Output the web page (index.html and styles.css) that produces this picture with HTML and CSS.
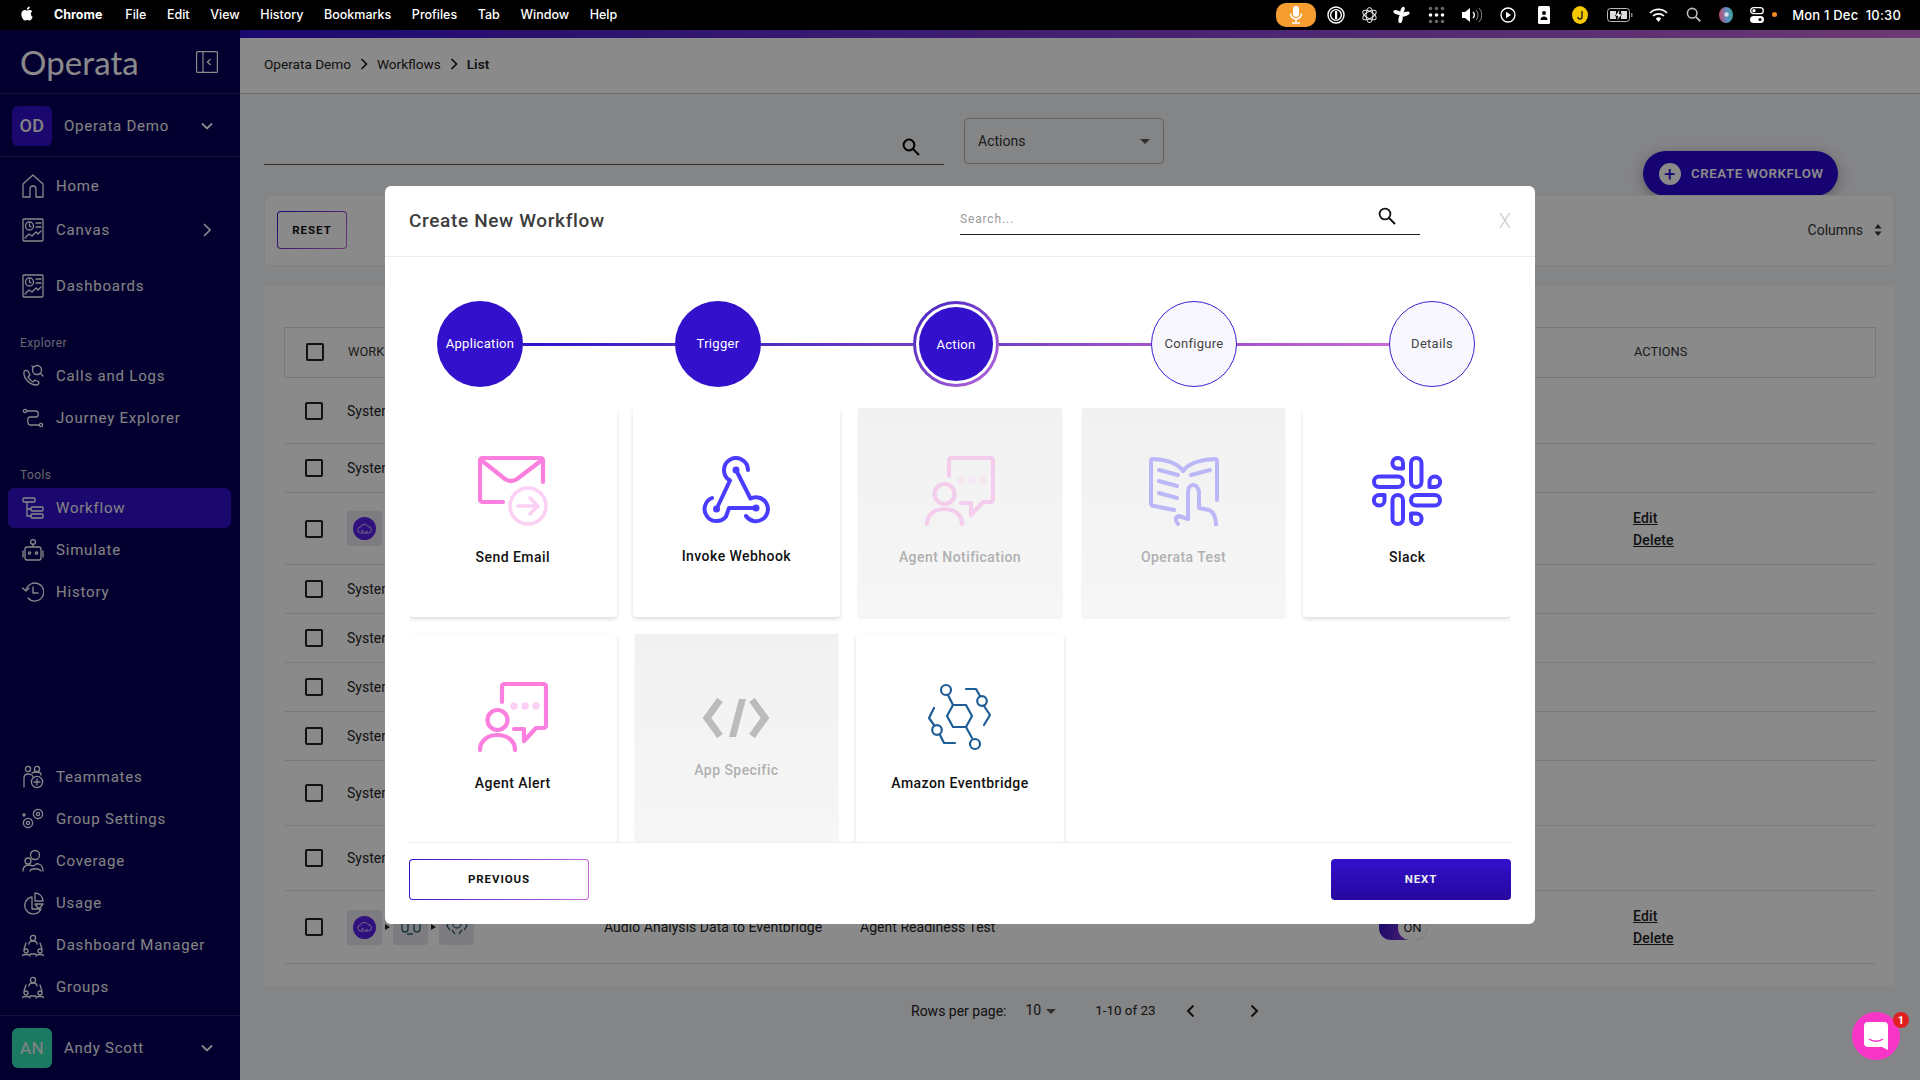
FILE: index.html
```html
<!DOCTYPE html>
<html lang="en">
<head>
<meta charset="utf-8">
<title>Operata - Workflows</title>
<link rel="stylesheet" href="styles.css">
</head>
<body>
<header class="menubar">
  <div class="menu-left">
    <svg class="apple" viewBox="0 0 24 24"><path fill="#fff" d="M12.152 6.896c-.948 0-2.415-1.078-3.96-1.04-2.04.027-3.91 1.183-4.961 3.014-2.117 3.675-.546 9.103 1.519 12.09 1.013 1.454 2.208 3.09 3.792 3.039 1.52-.065 2.09-.987 3.935-.987 1.831 0 2.35.987 3.96.948 1.637-.026 2.676-1.48 3.676-2.948 1.156-1.688 1.636-3.325 1.662-3.415-.039-.013-3.182-1.221-3.22-4.857-.026-3.04 2.48-4.494 2.597-4.559-1.429-2.09-3.623-2.324-4.39-2.376-2-.156-3.675 1.09-4.61 1.09zM15.53 3.83c.843-1.012 1.4-2.427 1.245-3.83-1.207.052-2.662.805-3.532 1.818-.78.896-1.454 2.338-1.273 3.714 1.338.104 2.715-.688 3.559-1.701"/></svg>
    <b>Chrome</b><span>File</span><span>Edit</span><span>View</span><span>History</span><span>Bookmarks</span><span>Profiles</span><span>Tab</span><span>Window</span><span>Help</span>
  </div>
  <div class="menu-right">
    <span class="mic"><svg width="14" height="20" viewBox="0 0 14 20"><rect x="4" y="1" width="6" height="11" rx="3" fill="#fff"/><path d="M1.5 8.5a5.5 5.5 0 0 0 11 0M7 14v3M3 18h8" fill="none" stroke="#fff" stroke-width="1.5"/></svg></span>
    <svg class="tray t1" width="18" height="18" viewBox="0 0 18 18"><circle cx="9" cy="9" r="8" fill="none" stroke="#fff" stroke-width="1.4"/><circle cx="9" cy="9" r="5.4" fill="none" stroke="#fff" stroke-width="1.4"/><rect x="8" y="5" width="2.2" height="8" fill="#fff"/></svg>
    <svg class="tray t2" width="17" height="18" viewBox="0 0 18 18"><g fill="none" stroke="#ddd" stroke-width="1.1"><ellipse cx="9" cy="9" rx="8" ry="3.6" transform="rotate(30 9 9)"/><ellipse cx="9" cy="9" rx="8" ry="3.6" transform="rotate(90 9 9)"/><ellipse cx="9" cy="9" rx="8" ry="3.6" transform="rotate(150 9 9)"/></g></svg>
    <svg class="tray t3" width="17" height="18" viewBox="0 0 18 18"><g fill="#fff"><ellipse cx="5" cy="6.5" rx="4.8" ry="2.2" transform="rotate(20 5 6.5)"/><ellipse cx="13" cy="8" rx="4.8" ry="2.2" transform="rotate(-20 13 8)"/><ellipse cx="10" cy="4" rx="2" ry="4" transform="rotate(20 10 4)"/><ellipse cx="8" cy="13" rx="2.2" ry="4.6" transform="rotate(10 8 13)"/></g></svg>
    <svg class="tray t4" width="17" height="18" viewBox="0 0 17 18"><g fill="#666"><circle cx="2.5" cy="2.5" r="1.8"/><circle cx="8.5" cy="2.5" r="1.8"/><circle cx="14.5" cy="2.5" r="1.8"/><circle cx="2.5" cy="15.5" r="1.8"/><circle cx="8.5" cy="15.5" r="1.8"/><circle cx="14.5" cy="15.5" r="1.8"/></g><g fill="#fff"><circle cx="2.5" cy="9" r="1.8"/><circle cx="8.5" cy="9" r="1.8"/><circle cx="14.5" cy="9" r="1.8"/></g></svg>
    <svg class="tray t5" width="20" height="16" viewBox="0 0 20 16"><path d="M0 5h3l5-4v14l-5-4H0z" fill="#fff"/><path d="M11 5a4 4 0 0 1 0 6" fill="none" stroke="#fff" stroke-width="1.4"/><path d="M14 3a7 7 0 0 1 0 10M17 1a10 10 0 0 1 0 14" fill="none" stroke="#888" stroke-width="1"/></svg>
    <svg class="tray t6" width="16" height="16" viewBox="0 0 16 16"><circle cx="8" cy="8" r="7" fill="none" stroke="#fff" stroke-width="1.3"/><path d="M6 4.8 11 8l-5 3.2z" fill="#fff"/></svg>
    <svg class="tray t7" width="12" height="18" viewBox="0 0 12 18"><rect width="12" height="18" rx="1.5" fill="#fff"/><circle cx="6" cy="7" r="2" fill="#000"/><path d="M2.5 14a3.5 3.5 0 0 1 7 0z" fill="#000"/></svg>
    <svg class="tray t8" width="16" height="18" viewBox="0 0 16 18"><ellipse cx="8" cy="9" rx="8" ry="9" fill="#f5c800"/><path d="M10 5v6a2 2 0 0 1-4 0" fill="none" stroke="#222" stroke-width="1.4"/></svg>
    <svg class="tray t9" width="26" height="14" viewBox="0 0 26 14"><rect x=".5" y=".5" width="22" height="13" rx="3" fill="none" stroke="#bbb"/><path d="M3 3h6v8H3zM14 3h6v8h-6z" fill="#ddd"/><path d="M13 1 8 8h3l-1 5 5-7h-3z" fill="#fff" stroke="#000" stroke-width=".6"/><rect x="24" y="5" width="1.5" height="4" fill="#888"/></svg>
    <svg class="tray t10" width="19" height="14" viewBox="0 0 19 14"><g fill="none" stroke="#fff" stroke-width="1.7"><path d="M1 5a12 12 0 0 1 17 0"/><path d="M4 8a8 8 0 0 1 11 0"/></g><path d="M9.5 14 6.8 10.6a4 4 0 0 1 5.4 0z" fill="#fff"/></svg>
    <svg class="tray t11" width="15" height="15" viewBox="0 0 15 15"><circle cx="6.2" cy="6.2" r="4.8" fill="none" stroke="#bbb" stroke-width="1.6"/><path d="m10 10 4.4 4.4" stroke="#bbb" stroke-width="1.8"/></svg>
    <svg class="tray t12" width="14" height="16" viewBox="0 0 14 16"><defs><linearGradient id="siri" x1="0" x2="1"><stop offset="0" stop-color="#c2476a"/><stop offset=".55" stop-color="#5f8fc2"/><stop offset="1" stop-color="#3aa59b"/></linearGradient></defs><ellipse cx="7" cy="8" rx="7" ry="8" fill="url(#siri)"/><circle cx="7.5" cy="7.5" r="2.2" fill="#d9dfe8"/></svg>
    <svg class="tray t13" width="14" height="16" viewBox="0 0 14 16"><rect x=".7" y=".7" width="12.6" height="6" rx="3" fill="none" stroke="#fff" stroke-width="1.3"/><circle cx="4" cy="3.7" r="1.6" fill="#fff"/><rect y="9" width="14" height="7" rx="3.5" fill="#fff"/><circle cx="10" cy="12.5" r="1.6" fill="#000"/></svg>
    <span class="dot"></span>
    <span class="clock">Mon 1 Dec&nbsp;&nbsp;10:30</span>
  </div>
</header>

<div class="app">
  <aside class="sidebar">
    <div class="brand">
      <span class="logo">Operata</span>
      <svg class="collapse" width="22" height="22" viewBox="0 0 22 22"><g fill="none" stroke="#fff" stroke-width="1.2"><rect x=".6" y=".6" width="20.8" height="20.8" rx="1"/><path d="M7 1v20"/><path d="m14.5 8-3 3 3 3" stroke-width="1.4"/></g></svg>
    </div>
    <div class="org">
      <span class="avatar avatar-org">OD</span>
      <span class="org-name">Operata Demo</span>
      <svg class="chev-down" width="12" height="8" viewBox="0 0 12 8"><path d="m1 1.5 5 5 5-5" fill="none" stroke="#fff" stroke-width="1.8"/></svg>
    </div>
    <nav class="nav">
      <a class="item first"><svg class="ni" viewBox="0 0 22 24"><path d="M1 10 11 1l10 9v13h-7v-8a3 3 0 0 0-6 0v8H1z"/></svg>Home</a>
      <a class="item canvas"><svg class="ni" viewBox="0 0 22 24"><rect x="1" y="1" width="20" height="22" rx="1"/><circle cx="7.5" cy="8" r="4"/><path d="M7.5 6v2l1.5 1M14 5h5M14 9h5M3 20l4-4 3 2 4-4 2 2 3-3"/></svg>Canvas<svg class="chev-right" width="8" height="14" viewBox="0 0 8 14"><path d="m1 1 6 6-6 6" fill="none" stroke="#fff" stroke-width="1.6"/></svg></a>
      <a class="item dash"><svg class="ni" viewBox="0 0 22 24"><rect x="1" y="1" width="20" height="22" rx="1"/><circle cx="7.5" cy="8" r="4"/><path d="M7.5 6v2l1.5 1M14 5h5M14 9h5M3 20l4-4 3 2 4-4 2 2 3-3"/></svg>Dashboards</a>
      <div class="nav-label">Explorer</div>
      <a class="item"><svg class="ni" viewBox="0 0 22 24"><path d="M2 8c-1 6 6 13 12 13 2 0 3-1 3-3l-4-2-2 2c-2-1-4-3-5-5l2-2-2-4C4 6 2 6 2 8z"/><circle cx="15" cy="6" r="4.5"/><path d="m18 9 3 3M11 3l-1-1"/></svg>Calls and Logs</a>
      <a class="item"><svg class="ni" viewBox="0 0 22 24"><circle cx="3" cy="5" r="1.6"/><circle cx="19" cy="19" r="1.6"/><path d="M5 5h9c3 0 3 6 0 6H8c-3 0-3 8 0 8h9"/></svg>Journey Explorer</a>
      <div class="nav-label">Tools</div>
      <a class="item active"><svg class="ni" viewBox="0 0 22 24"><rect x="1" y="2" width="12" height="4" rx="1"/><rect x="9" y="11" width="12" height="4" rx="1"/><rect x="9" y="18" width="12" height="4" rx="1"/><path d="M5 6v7h4M5 13v7h4"/></svg>Workflow</a>
      <a class="item"><svg class="ni" viewBox="0 0 22 24"><rect x="3" y="9" width="16" height="13" rx="2"/><circle cx="11" cy="4" r="2.4"/><path d="M11 6v3M1 13v6M21 13v6"/><circle cx="7.5" cy="15" r="1.2"/><circle cx="14.5" cy="15" r="1.2"/></svg>Simulate</a>
      <a class="item"><svg class="ni" viewBox="0 0 22 24"><path d="M4 10a9 9 0 1 1 2 8"/><path d="m0.5 8 3.5 3 3-3M11 7v6h5"/></svg>History</a>
      <div class="nav-bottom">
        <a class="item"><svg class="ni" viewBox="0 0 22 24"><circle cx="6" cy="4" r="2.6"/><circle cx="15" cy="4" r="2.6"/><path d="M2 22v-9c0-3 2-4 4-4s5 1 5 3M10 8c1-1 3-1 5-1s4 1 4 3"/><circle cx="15" cy="17" r="5.6"/><path d="M15 14v6M12 17h6"/></svg>Teammates</a>
        <a class="item"><svg class="ni" viewBox="0 0 22 24"><circle cx="6" cy="16" r="4.6" stroke-dasharray="2 1"/><circle cx="6" cy="16" r="1.6"/><circle cx="16" cy="7" r="4.6" stroke-dasharray="2 1"/><circle cx="16" cy="7" r="1.6"/><circle cx="2" cy="8" r="1"/></svg>Group Settings</a>
        <a class="item"><svg class="ni" viewBox="0 0 22 24"><circle cx="13" cy="6" r="4.5"/><circle cx="6" cy="12" r="3"/><path d="M1 22c0-5 3-6 6-6s5 2 6 0 8-2 8 6M8 22c1-3 9-3 11 0"/></svg>Coverage</a>
        <a class="item"><svg class="ni" viewBox="0 0 22 24"><path d="M10 6a8.5 8.5 0 1 0 9 12H10z"/><path d="M13 2a8 8 0 0 1 8 8h-8zM13 13h8l-4 5z"/></svg>Usage</a>
        <a class="item"><svg class="ni" viewBox="0 0 22 24"><circle cx="11" cy="5" r="2.6"/><path d="M7 11c0-2 2-3 4-3s4 1 4 3M4 10 2 16M18 10l2 6M8 21h6"/><circle cx="4" cy="18" r="2"/><circle cx="18" cy="18" r="2"/><path d="M0 23c0-2 8-2 8 0M14 23c0-2 8-2 8 0"/></svg>Dashboard Manager</a>
        <a class="item"><svg class="ni" viewBox="0 0 22 24"><circle cx="11" cy="5" r="2.6"/><path d="M7 11c0-2 2-3 4-3s4 1 4 3M4 10 2 16M18 10l2 6M8 21h6"/><circle cx="4" cy="18" r="2"/><circle cx="18" cy="18" r="2"/><path d="M0 23c0-2 8-2 8 0M14 23c0-2 8-2 8 0"/></svg>Groups</a>
      </div>
    </nav>
    <div class="user">
      <span class="avatar avatar-user">AN</span>
      <span class="org-name">Andy Scott</span>
      <svg class="chev-down" width="12" height="8" viewBox="0 0 12 8"><path d="m1 1.5 5 5 5-5" fill="none" stroke="#fff" stroke-width="1.8"/></svg>
    </div>
  </aside>

  <main class="main">
    <div class="topline"></div>
    <div class="crumbs">
      <span>Operata Demo</span><svg class="crumb-sep" width="8" height="12" viewBox="0 0 8 12"><path d="m1.5 1 5 5-5 5" fill="none" stroke="#111" stroke-width="1.6"/></svg>
      <span>Workflows</span><svg class="crumb-sep" width="8" height="12" viewBox="0 0 8 12"><path d="m1.5 1 5 5-5 5" fill="none" stroke="#111" stroke-width="1.6"/></svg>
      <b>List</b>
    </div>
    <div class="toolbar">
      <div class="searchbox">
        <svg class="search-ic" width="18" height="18" viewBox="0 0 18 18"><circle cx="7" cy="7" r="5.4" fill="none" stroke="#000" stroke-width="2"/><path d="m11 11 6 6" stroke="#000" stroke-width="2"/></svg>
      </div>
      <div class="select"><span class="select-text">Actions</span><span class="caret"></span></div>
      <button class="create"><span class="plus">+</span>CREATE WORKFLOW</button>
    </div>
    <div class="filters">
      <button class="reset">RESET</button>
      <div class="columns">Columns
        <svg width="8" height="14" viewBox="0 0 8 14"><path d="M4 1 7.5 5.5H.5zM4 13 .5 8.5h7z" fill="#333"/></svg>
      </div>
    </div>
    <section class="table-card">
      <div class="row head"><span class="check"></span><span class="cell">WORKFLOW</span><span></span><span></span><span></span><span class="cell">ACTIONS</span></div>
      <div class="row h66"><span class="check"></span><span class="cell">System</span></div>
      <div class="row h49"><span class="check"></span><span class="cell">System</span></div>
      <div class="row h72"><span class="check"></span><span class="apps"><span class="app-box"><span class="app-dot"><svg width="15" height="12" viewBox="0 0 15 12"><path d="M4 10a3 3 0 0 1-.4-6A4 4 0 0 1 11 3.600 3.200 3.200 0 0 1 11.500 10z" fill="none" stroke="#cfc4f5" stroke-width="1"/><circle cx="5.500" cy="8" r="1" fill="#cfc4f5"/><circle cx="9.500" cy="9" r="1" fill="#cfc4f5"/></svg></span></span></span><span></span><span></span><span></span><span class="acts"><u>Edit</u><u>Delete</u></span></div>
      <div class="row h49"><span class="check"></span><span class="cell">System</span></div>
      <div class="row h49"><span class="check"></span><span class="cell">System</span></div>
      <div class="row h49"><span class="check"></span><span class="cell">System</span></div>
      <div class="row h49"><span class="check"></span><span class="cell">System</span></div>
      <div class="row h65"><span class="check"></span><span class="cell">System</span></div>
      <div class="row h65"><span class="check"></span><span class="cell">System</span></div>
      <div class="row h73"><span class="check"></span>
        <span class="apps">
          <span class="app-box"><span class="app-dot"><svg width="15" height="12" viewBox="0 0 15 12"><path d="M4 10a3 3 0 0 1-.4-6A4 4 0 0 1 11 3.600 3.200 3.200 0 0 1 11.500 10z" fill="none" stroke="#cfc4f5" stroke-width="1"/><circle cx="5.500" cy="8" r="1" fill="#cfc4f5"/><circle cx="9.500" cy="9" r="1" fill="#cfc4f5"/></svg></span></span><i class="tri"></i>
          <span class="app-box"><svg width="24" height="22" viewBox="0 0 24 22"><path d="M3 8v5a3 3 0 0 0 6 0V8M15 8v5a3 3 0 0 0 6 0V8M8 18h6" fill="none" stroke="#2f5f66" stroke-width="1.4"/></svg></span><i class="tri"></i>
          <span class="app-box"><svg width="24" height="22" viewBox="0 0 24 22"><circle cx="12" cy="8" r="4" fill="none" stroke="#2f5f66" stroke-width="1.3"/><path d="M4 5 2 10l3 4M20 5l2 5-3 4M7 14l3 4M17 14l-3 4" fill="none" stroke="#2f5f66" stroke-width="1.3"/></svg></span>
        </span>
        <span class="cell">Audio Analysis Data to Eventbridge</span>
        <span class="cell">Agent Readiness Test</span>
        <span class="toggle"><span class="knob">ON</span></span>
        <span class="acts"><u>Edit</u><u>Delete</u></span>
      </div>
    </section>
    <div class="pager">
      <span class="rpp">Rows per page:</span>
      <span class="rpp-val">10</span><span class="caret small"></span>
      <span class="range">1-10 of 23</span>
      <svg class="pg-prev" width="9" height="14" viewBox="0 0 9 14"><path d="M7.5 1.5 2 7l5.5 5.5" fill="none" stroke="#222" stroke-width="2"/></svg>
      <svg class="pg-next" width="9" height="14" viewBox="0 0 9 14"><path d="M1.5 1.5 7 7l-5.5 5.5" fill="none" stroke="#222" stroke-width="2"/></svg>
    </div>
  </main>
</div>

<div class="scrim">
  <div class="modal">
    <div class="modal-head">
      <h2>Create New Workflow</h2>
      <div class="modal-search">
        <span class="ph">Search...</span>
        <svg width="18" height="18" viewBox="0 0 18 18"><circle cx="7" cy="7" r="5.4" fill="none" stroke="#111" stroke-width="1.8"/><path d="m11 11 6 6" stroke="#111" stroke-width="2"/></svg>
      </div>
      <span class="close">X</span>
    </div>
    <div class="stepper">
      <span class="step done">Application</span><i class="link l1"></i>
      <span class="step done">Trigger</span><i class="link l2"></i>
      <span class="step current">Action</span><i class="link l3"></i>
      <span class="step todo">Configure</span><i class="link l4"></i>
      <span class="step todo">Details</span>
    </div>
    <div class="choices">
      <div class="choice">
        <svg class="choice-ic" viewBox="0 0 70 70"><g class="pk"><path d="M25 46H5q-3 0-3-3V5q0-3 3-3h57q3 0 3 3v21"/><path d="M3 4 27 23q6 4 12 0L64 4"/></g><g class="pk-l"><circle cx="50" cy="50" r="18"/><path d="M40 50h19M52 42l8 8-8 8"/></g></svg>
        <span class="choice-name">Send Email</span>
      </div>
      <div class="choice">
        <svg class="choice-ic" viewBox="0 0 70 70"><g class="bl"><path d="M47 14A12 12 0 1 0 29 24.500L15.500 53"/><path d="M11 42A12 12 0 1 0 25 60.500L28 52H55"/><path d="M35 14 49.500 42.500A12 12 0 1 1 45 60"/></g><g class="bl-dot"><circle cx="35" cy="14" r="3.500"/><circle cx="15.500" cy="53" r="3.500"/><circle cx="55" cy="52" r="3.500"/></g></svg>
        <span class="choice-name up1">Invoke Webhook</span>
      </div>
      <div class="choice off">
        <svg class="choice-ic" viewBox="0 0 70 70"><g class="pk"><path d="M24 20V5q0-3 3-3h38q3 0 3 3v38q0 3-3 3h-7L46 59V47H36"/><circle cx="19.500" cy="38" r="10"/><path d="M2 68c0-20 35-20 35 0"/></g><g class="pk-l"><circle cx="36" cy="24" r="2"/><circle cx="47" cy="24" r="2"/><circle cx="58" cy="24" r="2"/></g></svg>
        <span class="choice-name">Agent Notification</span>
      </div>
      <div class="choice off">
        <svg class="choice-ic" viewBox="0 0 70 70"><g class="bl"><path d="M34 15C28 6 14 3 3 3Q2 3 2 6V47Q2 50 5 50L25 54"/><path d="M34 15C40 6 56 3 66 3Q68 3 68 6V44"/><path d="M10 14 29 19M10 25 28 30M10 37 28 42M42 19 61 14"/><path d="M29 68Q24 62 30 60L39 63V35Q40 29 44 29T50 35V52L60 54Q67 57 67 69"/></g></svg>
        <span class="choice-name">Operata Test</span>
      </div>
      <div class="choice">
        <svg class="choice-ic" viewBox="0 0 70 70"><defs><g id="slk" class="bl"><path d="M31 12.500H25.500A5.300 5.300 0 1 1 31 7.200Z"/><rect x="39" y="2" width="10.500" height="29" rx="5.200"/></g></defs><use href="#slk"/><use href="#slk" transform="rotate(90 35 35)"/><use href="#slk" transform="rotate(180 35 35)"/><use href="#slk" transform="rotate(270 35 35)"/></svg>
        <span class="choice-name">Slack</span>
      </div>
      <div class="choice">
        <svg class="choice-ic" viewBox="0 0 70 70"><g class="pk"><path d="M24 20V5q0-3 3-3h38q3 0 3 3v38q0 3-3 3h-7L46 59V47H36"/><circle cx="19.500" cy="38" r="10"/><path d="M2 68c0-20 35-20 35 0"/></g><g class="pk-l"><circle cx="36" cy="24" r="2"/><circle cx="47" cy="24" r="2"/><circle cx="58" cy="24" r="2"/></g></svg>
        <span class="choice-name">Agent Alert</span>
      </div>
      <div class="choice off code">
        <svg class="code-ic" width="66" height="40" viewBox="0 0 66 40"><path d="M17 2 4 20l13 18M49 2l13 18-13 18" fill="none" stroke="#bbb" stroke-width="7"/><path d="M36 1h7L33 39h-7z" fill="#bbb"/></svg>
        <span class="choice-name">App Specific</span>
      </div>
      <div class="choice">
        <svg class="choice-ic" viewBox="0 0 70 70"><g class="aws"><path d="M22 34 28 23H41L47 34 41 45H28Z"/><circle cx="21" cy="8" r="5"/><path d="M23 13 28 23M41 45 47 56"/><circle cx="50" cy="62" r="5"/><circle cx="57" cy="19" r="4.800"/><path d="M41 7H51L55 14M59 24 65 33 59 43"/><circle cx="12" cy="48" r="4.800"/><path d="M9 26 4 36 9 43M15 53 19 61H30"/></g></svg>
        <span class="choice-name">Amazon Eventbridge</span>
      </div>
    </div>
    <div class="modal-foot">
      <button class="btn prev">PREVIOUS</button>
      <button class="btn next">NEXT</button>
    </div>
  </div>
</div>

<div class="chat">
  <svg width="26" height="30" viewBox="0 0 26 30"><path d="M5 1h16a4 4 0 0 1 4 4v24l-6-3H5a4 4 0 0 1-4-4V5a4 4 0 0 1 4-4z" fill="#fff"/><path d="M6 18c4 3 10 3 14 0" fill="none" stroke="#f935c8" stroke-width="1.5"/></svg>
  <span class="badge">1</span>
</div>
</body>
</html>
```
FILE: styles.css
```css
* { box-sizing: border-box; }
html, body { margin: 0; padding: 0; }
body {
  position: relative;
  width: 1920px;
  height: 1080px;
  overflow: hidden;
  font-family: Roboto, "Noto Sans", sans-serif;
  color: #111;
  background: #f4f5fa;
}
svg { display: block; flex: none; }
button { font: inherit; cursor: pointer; }

/* mac menu bar */
.menubar {
  height: 30px;
  background: #000;
  color: #fff;
  display: flex;
  align-items: center;
  justify-content: space-between;
  padding-bottom: 1px;
  font-family: Inter, "Liberation Sans", sans-serif;
  font-size: 12.5px;
  font-weight: 500;
}
.menu-left { display: flex; align-items: center; padding-left: 20px; }
.menu-left b { font-weight: 700; margin-right: 23px; }
.menu-left span { margin-right: 20.6px; }
.apple { width: 14px; height: 17px; margin-right: 20px; margin-top: -2px; }
.menu-right { display: flex; align-items: center; padding-right: 19px; }
.mic {
  width: 40px; height: 24px; border-radius: 10px;
  background: #f69d32;
  display: flex; align-items: center; justify-content: center;
}
.t1 { margin-left: 11px; }
.t2 { margin-left: 16px; }
.t3 { margin-left: 15px; }
.t4 { margin-left: 18px; }
.t5 { margin-left: 17px; }
.t6 { margin-left: 18px; }
.t7 { margin-left: 22px; }
.t8 { margin-left: 22px; }
.t9 { margin-left: 19px; }
.t10 { margin-left: 16px; }
.t11 { margin-left: 18px; }
.t12 { margin-left: 18px; }
.t13 { margin-left: 17px; }
.dot { width: 5px; height: 5px; border-radius: 50%; background: #f08a24; margin-left: 8px; }
.clock { margin-left: 15px; font-size: 13px; letter-spacing: .2px; }

/* shell */
.app { display: flex; height: 1050px; }
.sidebar {
  width: 240px;
  flex: none;
  background: #06005a;
  color: #f2f2f2;
  display: flex;
  flex-direction: column;
}
.brand {
  height: 64px;
  flex: none;
  display: flex;
  align-items: center;
  justify-content: space-between;
  padding: 0 22px 0 20px;
  border-bottom: 1px solid #231d6e;
}
.logo {
  font-family: Lato, sans-serif;
  font-size: 33px;
  font-weight: 400;
  color: #fff;
  letter-spacing: .1px;
}
.org {
  height: 63px;
  flex: none;
  display: flex;
  align-items: center;
  padding: 1px 27px 0 12px;
  border-bottom: 1px solid #231d6e;
}
.avatar {
  width: 40px; height: 40px; border-radius: 6px;
  display: flex; align-items: center; justify-content: center;
  flex: none;
}
.avatar-org { background: #3310cc; font-size: 18px; font-weight: 500; letter-spacing: .5px; }
.avatar-user { background: #37e2b6; font-size: 17px; letter-spacing: .4px; }
.org-name { flex: 1; margin-left: 12px; font-size: 15px; letter-spacing: .75px; }
.nav { flex: 1; display: flex; flex-direction: column; min-height: 0; }
.item {
  height: 40px;
  margin: 0 9px 2px 8px;
  padding-left: 14px;
  display: flex;
  align-items: center;
  font-size: 15px;
  letter-spacing: .8px;
  border-radius: 6px;
  flex: none;
}
.item.first { margin-top: 9px; }
.item.canvas { margin-top: 2px; }
.item.dash { margin-top: 14px; }
.item.active { background: #3310cc; }
.ni {
  width: 22px; height: 24px;
  margin-right: 12px;
  fill: none;
  stroke: #fff;
  stroke-width: 1.3;
  stroke-linecap: round;
  stroke-linejoin: round;
}
.chev-right { margin-left: auto; margin-right: 20px; }
.nav-label {
  height: 16px;
  margin: 26px 0 6px 20px;
  font-size: 12px;
  line-height: 18px;
  letter-spacing: .4px;
  color: #bdbdc8;
}
.nav-bottom { margin-top: auto; padding-bottom: 6px; }
.user {
  height: 65px;
  flex: none;
  display: flex;
  align-items: center;
  padding: 0 27px 0 12px;
  border-top: 1px solid #231d6e;
}

.main { flex: 1; min-width: 0; display: flex; flex-direction: column; }
.topline {
  height: 8px;
  flex: none;
  background: linear-gradient(90deg, #3310cc, #c86ad6);
}
.crumbs {
  height: 56px;
  flex: none;
  background: #fff;
  border-bottom: 1px solid #c9c9cc;
  display: flex;
  align-items: center;
  padding: 0 24px 3px;
  font-size: 13.6px;
  color: #222;
}
.crumbs b { font-weight: 600; }
.crumb-sep { margin: 0 9px 0 9px; }
.toolbar { height: 101px; flex: none; display: flex; align-items: flex-start; padding-left: 24px; }
.searchbox {
  width: 680px; height: 71px;
  border-bottom: 1px solid #555;
  display: flex; align-items: flex-end; justify-content: flex-end;
  padding: 0 24px 8px 0;
}
.select {
  width: 200px; height: 46px;
  margin: 24px 0 0 20px;
  border: 1px solid #b5b5b5;
  border-radius: 4px;
  display: flex; align-items: center; justify-content: space-between;
  padding: 0 13px;
  font-size: 14px;
  color: #333;
}
.select-text { background: #f8f8f8; padding: 3px 0; }
.caret {
  width: 0; height: 0;
  border-left: 5px solid transparent;
  border-right: 5px solid transparent;
  border-top: 5px solid #555;
}
.create {
  margin: 57px 0 0 479px;
  width: 195px; height: 45px;
  border: 0;
  border-radius: 23px;
  background: #2a05d0;
  color: #fff;
  display: flex; align-items: center;
  padding: 0 0 0 16px;
  font-size: 13.3px;
  font-weight: 600;
  letter-spacing: .55px;
  box-shadow: 0 4px 14px rgba(0,0,0,.3);
  white-space: nowrap;
}
.plus {
  width: 22px; height: 22px; border-radius: 50%;
  background: #fff; color: #2a05d0;
  display: flex; align-items: center; justify-content: center;
  font-size: 20px; font-weight: 400;
  margin-right: 10px;
}
.filters {
  height: 71px;
  flex: none;
  margin: 0 25px 21px 24px;
  background: #fff;
  border: 1px solid #efeff3;
  border-radius: 4px;
  display: flex; align-items: center; justify-content: space-between;
  padding: 0 12px 1px 12px;
}
.reset {
  width: 70px; height: 38px;
  border: 1px solid transparent;
  border-radius: 4px;
  background: linear-gradient(#fff,#fff) padding-box, linear-gradient(135deg,#3310cc,#c86ad6) border-box;
  font-size: 11.5px; font-weight: 700; letter-spacing: 1px; color: #111;
}
.columns { display: flex; align-items: center; gap: 11px; font-size: 14px; color: #333; }
.table-card {
  height: 698px;
  flex: none;
  margin: 0 25px 0 24px;
  background: #fff;
  padding: 40px 19px 0 20px;
}
.row {
  display: grid;
  grid-template-columns: 63px 257px 256px 519px 254px 1fr;
  align-items: center;
  border-bottom: 1px solid #e2e2ee;
  font-size: 14px;
  color: #222;
}
.head { height: 51px; border: 1px solid #ddd; padding-bottom: 2px; font-size: 12.8px; color: #333; }
.h66 { height: 66px; }
.h49 { height: 49px; }
.h65 { height: 65px; }
.h72 { height: 72px; }
.h73 { height: 73px; }
.check {
  width: 18px; height: 18px;
  margin-left: 21px;
  border: 2px solid #222;
  border-radius: 2px;
}
.cell { white-space: nowrap; letter-spacing: .03px; }
.apps { display: flex; align-items: center; }
.app-box {
  width: 35px; height: 35px;
  background: #e8e8ee;
  border-radius: 3px;
  display: flex; align-items: center; justify-content: center;
}
.app-dot {
  width: 23px; height: 23px; border-radius: 50%; background: #5c20e8;
  display: flex; align-items: center; justify-content: center;
}
.tri {
  width: 0; height: 0; margin: 0 3px;
  border-left: 5px solid #222;
  border-top: 3px solid transparent;
  border-bottom: 3px solid transparent;
}
.toggle {
  width: 48px; height: 25px;
  border-radius: 12px;
  background: linear-gradient(100deg,#3310cc,#b050d0);
  display: flex; justify-content: flex-end;
}
.knob {
  width: 29px; height: 25px;
  border-radius: 12px;
  background: #fff;
  font-size: 13px;
  display: flex; align-items: center; justify-content: center;
}
.acts { display: flex; flex-direction: column; gap: 5px; padding-top: 1px; font-weight: 500; line-height: 17px; letter-spacing: .15px; align-items: flex-start; }
.pager {
  display: flex; align-items: center;
  padding: 18px 0 0 671px;
  font-size: 14px;
  color: #222;
  line-height: 16px;
}
.rpp-val { margin-left: 19px; margin-top: -3px; }
.caret.small { margin-left: 5px; }
.range { margin-left: 39px; font-size: 13.4px; }
.pg-prev { margin-left: 30px; }
.pg-next { margin-left: 55px; }

/* modal */
.scrim {
  position: absolute;
  left: 0; right: 0; top: 30px; bottom: 0;
  background: rgba(0,0,0,.46);
  display: flex;
  align-items: center;
  justify-content: center;
}
.modal {
  width: 1150px;
  height: 738px;
  background: #fff;
  border-radius: 6px;
  display: flex;
  flex-direction: column;
}
.modal-head {
  height: 71px;
  flex: none;
  display: flex;
  align-items: center;
  padding: 0 24px;
  border-bottom: 1px solid #ececf4;
}
.modal-head h2 {
  margin: -2px 0 0;
  width: 551px;
  font-size: 19px;
  font-weight: 500;
  letter-spacing: .65px;
  color: #3c3c3c;
}
.modal-search {
  width: 460px; height: 34px;
  align-self: flex-start;
  margin-top: 15px;
  border-bottom: 1.5px solid #222;
  display: flex; align-items: center; justify-content: space-between;
  padding: 0 24px 0 0;
}
.modal-search svg { margin-bottom: 4px; }
.ph { font-size: 12px; color: #9a9a9a; letter-spacing: .85px; margin-top: 2px; }
.close { margin-left: auto; font-size: 20px; font-weight: 300; color: #cfcfcf; }
.stepper {
  display: flex;
  align-items: center;
  flex: none;
  margin: 44px 60px 0 52px;
}
.step {
  width: 86px; height: 86px;
  padding-bottom: 1px;
  border-radius: 50%;
  flex: none;
  display: flex; align-items: center; justify-content: center;
  font-size: 13px;
  letter-spacing: .3px;
}
.done { background: #3310cc; color: #fff; }
.current {
  color: #fff;
  border: 3px solid transparent;
  padding: 3px;
  background: linear-gradient(#3310cc,#3310cc) content-box, linear-gradient(#fff,#fff) padding-box, linear-gradient(135deg,#3f20c0,#b868d8) border-box;
}
.todo { background: #f8f7fe; border: 1px solid #3f20d0; color: #444; }
.link { flex: 1; height: 3px; }
.l1 { background: linear-gradient(90deg,#3310cc,#4d2cc0); }
.l2 { background: linear-gradient(90deg,#4d2cc0,#7340c4); }
.l3 { background: linear-gradient(90deg,#7340c4,#a455cc); }
.l4 { background: linear-gradient(90deg,#a455cc,#c96cd6); }

.choices {
  height: 435px;
  flex: none;
  margin: 21px 24px 0;
  overflow: hidden;
  display: grid;
  grid-template-columns: repeat(5, 1fr);
  grid-auto-rows: 209px;
  gap: 17px 16px;
  border-bottom: 1px solid #eee;
}
.choice {
  background: #fff;
  border-radius: 4px;
  box-shadow: 0 2px 4px rgba(0,0,0,.14);
  display: flex;
  flex-direction: column;
  align-items: center;
  padding-top: 48px;
}
.choice-ic { width: 70px; height: 70px; }
.choice-name {
  margin-top: 21px;
  font-size: 14px;
  line-height: 20px;
  font-weight: 500;
  letter-spacing: .45px;
  color: #111;
}
.up1 { margin-top: 20px; }
.off {
  margin: 0 2px;
  background: linear-gradient(#f1f1f1,#f6f6f6);
  border-radius: 0;
  box-shadow: 0 1px 2px rgba(0,0,0,.08);
}
.off .choice-name { color: #b0b0b0; }
.off .choice-ic { opacity: .32; }
.code { padding-top: 64px; }
.code .choice-name { margin-top: 22px; }
.pk, .pk-l, .bl, .aws { fill: none; stroke-linecap: round; stroke-linejoin: round; }
.pk { stroke: #fb7fdf; stroke-width: 4.2; }
.pk-l { stroke: #fcd0f4; stroke-width: 3.6; }
.bl { stroke: #4a3cff; stroke-width: 4; }
.bl-dot { fill: #4a3cff; }
.aws { stroke: #1f5d96; stroke-width: 2.2; }
.modal-foot {
  flex: 1;
  display: flex;
  align-items: flex-start;
  justify-content: space-between;
  padding: 16px 24px 0;
}
.btn {
  width: 180px; height: 41px;
  border-radius: 4px;
  font-size: 11.5px;
  font-weight: 700;
  letter-spacing: .9px;
  padding-bottom: 2px;
}
.prev {
  border: 1px solid transparent;
  background: linear-gradient(#fff,#fff) padding-box, linear-gradient(100deg,#3310cc,#c86ad6) border-box;
  color: #111;
}
.next {
  border: 0;
  background: linear-gradient(#3310cc,#26089e);
  color: #eee;
}

/* chat launcher */
.chat {
  position: absolute;
  left: 1852px; top: 1012px;
  width: 48px; height: 48px;
  border-radius: 50%;
  background: #f935c8;
  display: flex; align-items: center; justify-content: center;
}
.badge {
  position: absolute;
  right: -9px; top: 0;
  width: 16px; height: 16px;
  border-radius: 50%;
  background: #e02020;
  color: #fff;
  font-size: 11px; font-weight: 700;
  display: flex; align-items: center; justify-content: center;
}
```
